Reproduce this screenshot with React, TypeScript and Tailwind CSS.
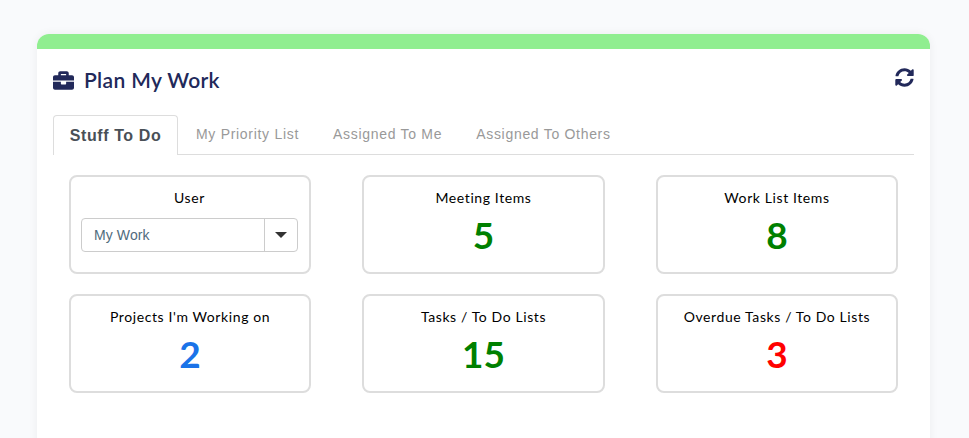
import { FaBriefcase, FaSyncAlt } from 'react-icons/fa';

const stats = [
  { label: 'Meeting Items', value: 5, color: 'text-[#008000]' },
  { label: 'Work List Items', value: 8, color: 'text-[#008000]' },
  { label: "Projects I'm Working on", value: 2, color: 'text-[#1a73e8]' },
  { label: 'Tasks / To Do Lists', value: 15, color: 'text-[#008000]' },
  { label: 'Overdue Tasks / To Do Lists', value: 3, color: 'text-[#ff0000]' },
];

const tabs = ['My Priority List', 'Assigned To Me', 'Assigned To Others'];

function StatCard({ label, value, color }: { label: string; value: number; color: string }) {
  return (
    <div className="h-[99px] rounded-lg border-2 border-[#dddddd] bg-white pt-[12px] text-center">
      <div className="text-[14px] leading-[17px] tracking-[0.6px] text-black">{label}</div>
      <div className={`mt-[6px] text-[37px] font-bold leading-[46px] ${color}`}>{value}</div>
    </div>
  );
}

export default function App() {
  return (
    <div className="h-[438px] overflow-hidden bg-[#f9fafc] pl-[37px] pr-[39px] pt-[34px] font-['Lato',sans-serif]">
      <div className="h-[420px] rounded-t-xl bg-white shadow-[0_0_10px_rgba(0,0,0,0.06)]">
        <div className="h-[15px] rounded-t-xl bg-[#90ee90]" />
        <div className="px-[16px]">
          <div className="flex items-start justify-between pt-[18px]">
            <div className="flex items-center gap-[10px] text-[#22295a]">
              <FaBriefcase className="h-[21px] w-[21px]" />
              <h1 className="text-[21px] font-semibold leading-[26px] tracking-[0.35px]">Plan My Work</h1>
            </div>
            <FaSyncAlt className="mt-px h-[19px] w-[19px] text-[#22295a]" />
          </div>
          <div className="mt-[22px] flex h-[40px] items-end border-b border-[#dddddd] font-['Liberation_Sans',sans-serif]">
            <div className="-mb-px mr-px flex h-[40px] w-[125px] items-center justify-center rounded-t border border-b-0 border-[#dddddd] bg-white text-[16px] font-bold tracking-[0.6px] text-[#495057]">
              Stuff To Do
            </div>
            {tabs.map((tab) => (
              <div key={tab} className="flex h-[40px] items-center px-[17px] text-[14px] tracking-[0.7px] text-[#999999]">
                {tab}
              </div>
            ))}
          </div>
          <div className="grid grid-cols-3 gap-x-[51.4px] gap-y-[20px] px-[16px] pt-[20px]">
            <div className="h-[99px] rounded-lg border-2 border-[#dddddd] bg-white pl-[10px] pr-[11px] pt-[12px] text-center">
              <div className="text-[14px] leading-[17px] tracking-[0.6px] text-black">User</div>
              <div className="mt-[12px] flex h-[34px] items-center rounded border border-[#cccccc] font-['Liberation_Sans',sans-serif] text-[14px] tracking-[0.1px] text-[#4f6b7d]">
                <span className="flex-1 pl-3 text-left">My Work</span>
                <span className="flex h-full w-[33px] items-center justify-center border-l border-[#cccccc]">
                  <span className="h-0 w-0 border-x-[6px] border-t-[6px] border-x-transparent border-t-[#333333]" />
                </span>
              </div>
            </div>
            {stats.map((s) => (
              <StatCard key={s.label} {...s} />
            ))}
          </div>
        </div>
      </div>
    </div>
  );
}
